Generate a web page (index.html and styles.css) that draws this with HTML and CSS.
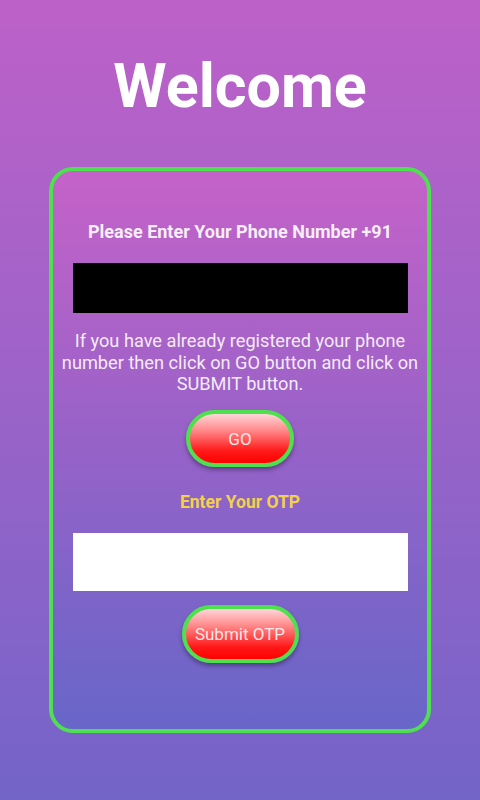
FILE: index.html
```html
<!DOCTYPE html>
<html>
<head>
<meta charset="utf-8">
<link rel="stylesheet" href="styles.css">
</head>
<body>
<div class="page">
  <h1 class="title">Welcome</h1>
  <div class="card">
    <p class="label">Please Enter Your Phone Number +91</p>
    <div class="field field-dark"></div>
    <p class="info">If you have already registered your phone number then click on GO button and click on SUBMIT button.</p>
    <button class="btn btn-go">GO</button>
    <p class="label label-otp">Enter Your OTP</p>
    <div class="field field-light"></div>
    <button class="btn btn-submit">Submit OTP</button>
  </div>
</div>
</body>
</html>
```

FILE: styles.css
```css
html, body {
  margin: 0;
  padding: 0;
}
body {
  width: 480px;
  height: 800px;
  overflow: hidden;
  font-family: Roboto, "Liberation Sans", sans-serif;
  background: linear-gradient(180deg, #bd61c8 0%, #9b63c8 50%, #7364c8 100%);
}
.page {
  display: flex;
  flex-direction: column;
  align-items: center;
  padding-top: 56px;
}
.title {
  margin: 0;
  font-size: 61px;
  line-height: 61px;
  font-weight: 700;
  color: #ffffff;
}
.card {
  margin-top: 50px;
  width: 382px;
  height: 566px;
  box-sizing: border-box;
  border: 4px solid #4fe052;
  border-radius: 24px;
  background: linear-gradient(180deg, #c562c8 0%, #9a62c8 45%, #6866c8 100%);
  display: flex;
  flex-direction: column;
  align-items: center;
  padding-top: 50px;
}
.label {
  margin: 0;
  font-size: 18px;
  line-height: 22px;
  font-weight: 700;
  color: #f6eef8;
}
.label-otp {
  margin-top: 24.5px;
  font-size: 17.5px;
  line-height: 21px;
  color: #f3d24a;
}
.field {
  width: 335px;
  flex: none;
}
.field-dark {
  margin-top: 20px;
  height: 50px;
  background: #000000;
}
.field-light {
  margin-top: 20.5px;
  height: 58px;
  background: #ffffff;
}
.info {
  margin: 17px 0 0;
  width: 370px;
  font-size: 18.2px;
  line-height: 21.5px;
  text-align: center;
  color: #f4eaf6;
}
.btn {
  flex: none;
  box-sizing: border-box;
  border: 4px solid #4ee04f;
  border-radius: 30px;
  background: linear-gradient(180deg, #ffd6d8 0%, #ff8586 35%, #ff1a1a 75%, #ff0000 100%);
  color: #ffe8ea;
  font-family: Roboto, "Liberation Sans", sans-serif;
  font-size: 17px;
  padding: 0;
  box-shadow: 0 3px 4px rgba(40, 20, 60, 0.45);
}
.btn-go {
  margin-top: 15.5px;
  width: 108px;
  height: 57px;
}
.btn-submit {
  margin-top: 14px;
  width: 117px;
  height: 58px;
}
```
